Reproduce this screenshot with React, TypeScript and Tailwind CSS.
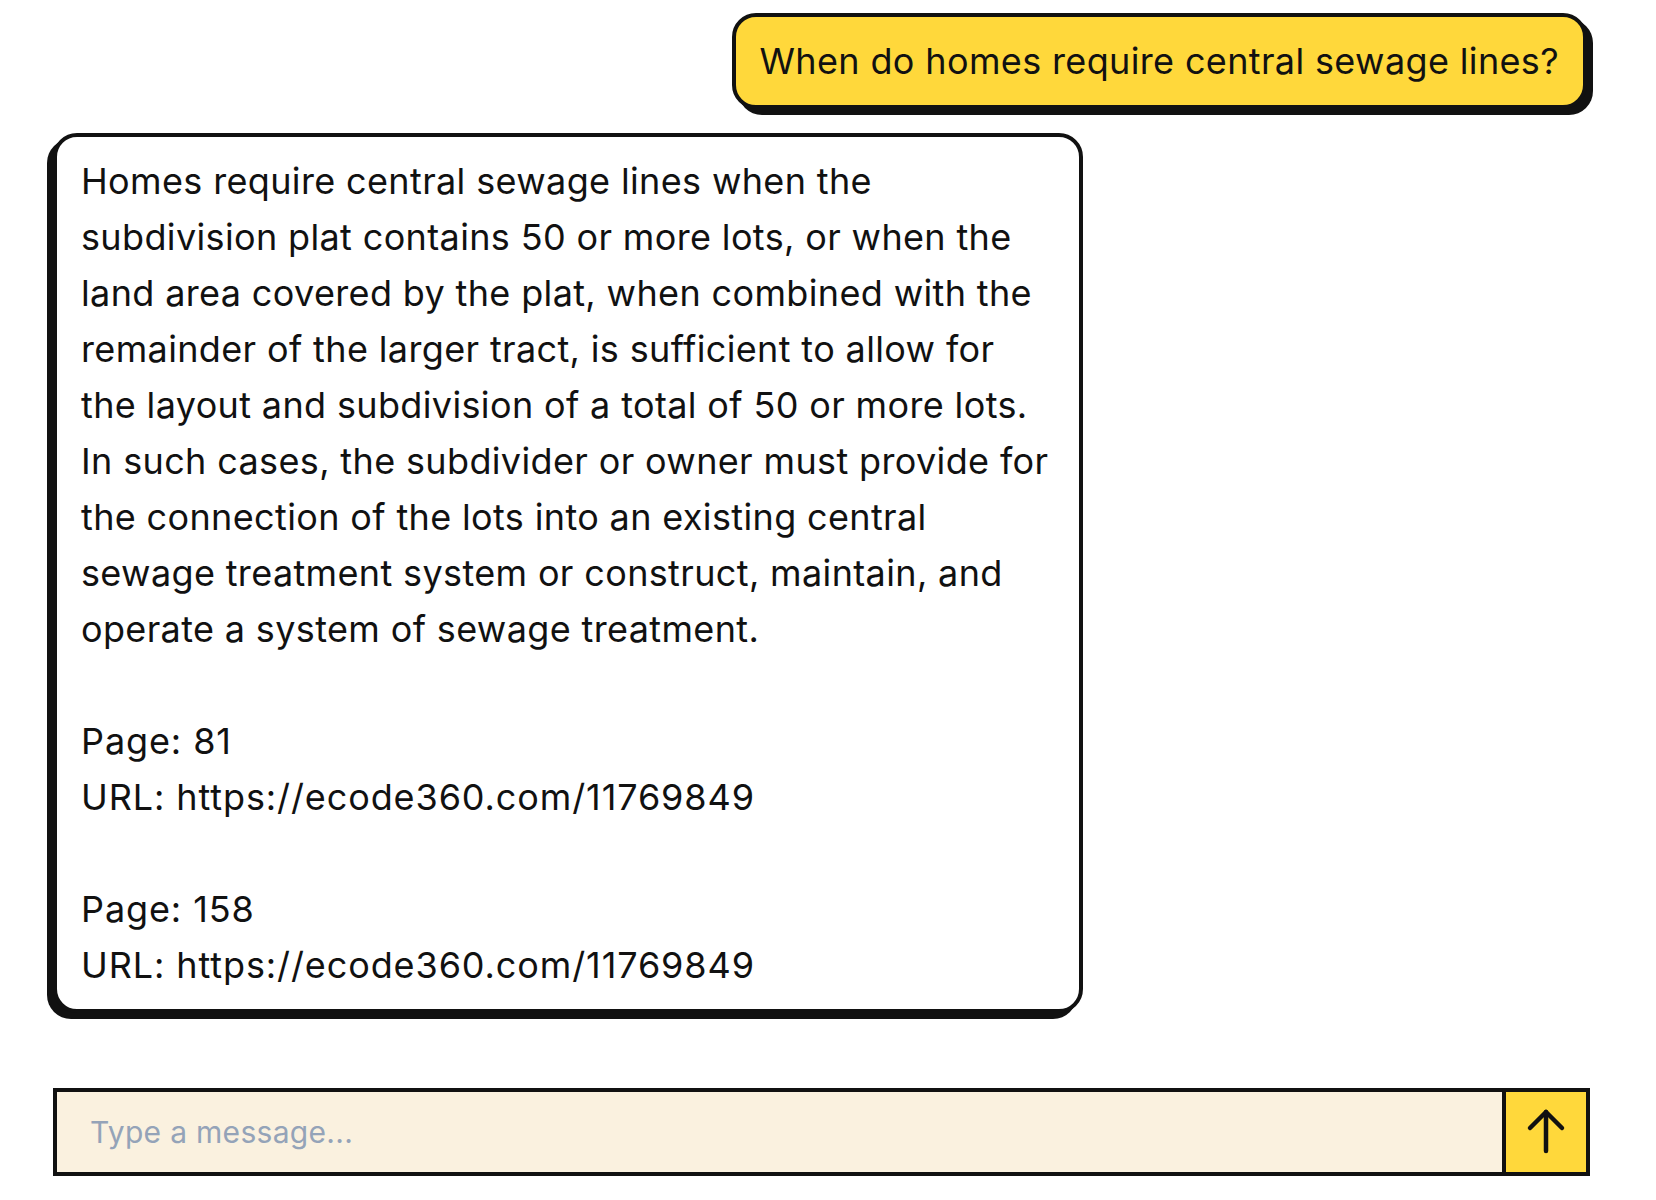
import React from "react";

const answer = `Homes require central sewage lines when the
subdivision plat contains 50 or more lots, or when the
land area covered by the plat, when combined with the
remainder of the larger tract, is sufficient to allow for
the layout and subdivision of a total of 50 or more lots.
In such cases, the subdivider or owner must provide for
the connection of the lots into an existing central
sewage treatment system or construct, maintain, and
operate a system of sewage treatment.`;

export default function App() {
  return (
    <div className="min-h-screen w-full bg-white font-['Inter','Liberation_Sans',sans-serif] text-[#111111]">
      <div className="ml-[53px] flex w-[1537px] flex-col pt-[13px]">
        <div className="mr-[3px] self-end whitespace-nowrap rounded-[24px] border-4 border-[#111111] bg-[#FFD83B] px-[24px] py-[16px] text-[36px] leading-[56px] tracking-[0.01em] shadow-[6px_6px_0_#111111]">
          When do homes require central sewage lines?
        </div>
        <div className="mt-[24px] w-[1030px] self-start whitespace-pre rounded-[24px] border-4 border-[#111111] bg-white px-[24px] py-[16px] text-[36px] leading-[56px] tracking-[0.01em] shadow-[-6px_6px_0_#111111]">
          {answer}
          {"\n\n"}
          <span className="tracking-[0.025em]">{"Page: 81\nURL: https://ecode360.com/11769849\n\nPage: 158\nURL: https://ecode360.com/11769849"}</span>
        </div>
        <div className="mt-[75px] flex h-[88px] w-full border-4 border-[#111111] bg-[#FAF1DF]">
          <input
            type="text"
            placeholder="Type a message..."
            className="min-w-0 flex-1 bg-transparent px-[33px] text-[30px] tracking-[0.01em] text-[#111111] outline-none placeholder:text-[#94A3B8]"
          />
          <button className="flex h-[80px] w-[84px] items-center justify-center border-l-4 border-[#111111] bg-[#FFD83B]">
            <svg width="80" height="80" viewBox="0 0 80 80" fill="none" stroke="#111111" strokeWidth="4.5" strokeLinecap="round" strokeLinejoin="round">
              <path d="M24 36 L40 20 L56 36" />
              <path d="M40 20 V59" />
            </svg>
          </button>
        </div>
      </div>
    </div>
  );
}
